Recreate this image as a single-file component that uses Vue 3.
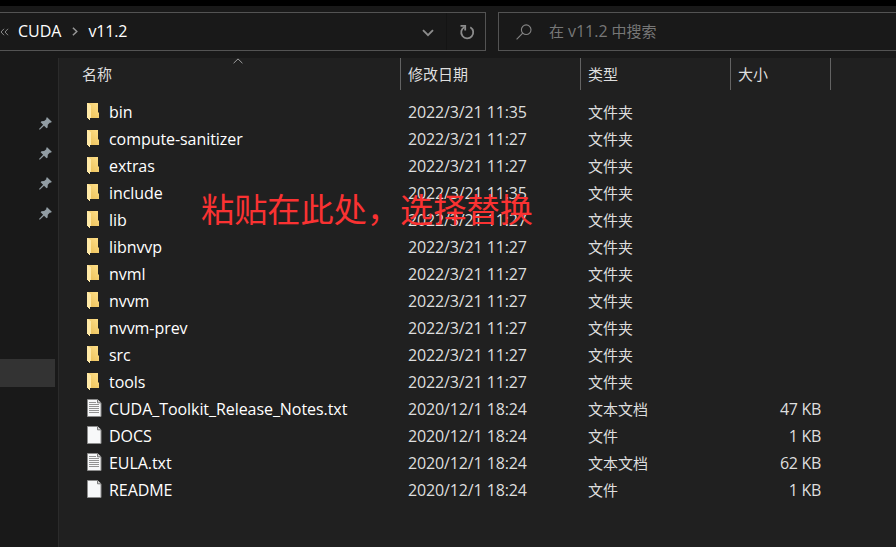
<script setup>
const folders = [
  ['bin', '11:35'],
  ['compute-sanitizer', '11:27'],
  ['extras', '11:27'],
  ['include', '11:35'],
  ['lib', '11:27'],
  ['libnvvp', '11:27'],
  ['nvml', '11:27'],
  ['nvvm', '11:27'],
  ['nvvm-prev', '11:27'],
  ['src', '11:27'],
  ['tools', '11:27'],
].map(([name, time]) => ({ name, date: `2022/3/21 ${time}`, kind: 'folder', type: '文件夹', size: '' }))

const files = [
  ['CUDA_Toolkit_Release_Notes.txt', 'text', '文本文档', '47 KB'],
  ['DOCS', 'file', '文件', '1 KB'],
  ['EULA.txt', 'text', '文本文档', '62 KB'],
  ['README', 'file', '文件', '1 KB'],
].map(([name, kind, type, size]) => ({ name, date: '2020/12/1 18:24', kind, type, size }))

const rows = [...folders, ...files]
</script>

<template>
  <div class="window">
    <div class="titlebar"></div>
    <div class="toolbar">
      <div class="address">
        <svg class="overflow" width="9" height="8" viewBox="0 0 9 8"><path d="M4 .8 1 4l3 3.2M8 .8 5 4l3 3.2" /></svg>
        <span class="crumb">CUDA</span>
        <svg class="sep" width="6" height="9" viewBox="0 0 6 9"><path d="M.9 .7 4.8 4.5.9 8.3" /></svg>
        <span class="crumb last">v11.2</span>
        <svg class="down" width="12" height="8" viewBox="0 0 12 8"><path d="m1 1.2 5 5 5-5" /></svg>
        <div class="refresh">
          <svg width="16" height="16" viewBox="0 0 16 16">
            <path d="M11.3 3.2a6 6 0 1 1-5.8-.2" />
            <path d="M1.5 1.8h4.7v4.7" />
          </svg>
        </div>
      </div>
      <div class="search">
        <svg width="16" height="16" viewBox="0 0 16 16"><circle cx="10.2" cy="5.7" r="4.8" /><path d="M6.7 9.2.6 15.3" /></svg>
        <span>在 <span class="latin">v11.2</span> 中搜索</span>
      </div>
    </div>
    <div class="main">
      <div class="nav">
        <div class="pins">
          <svg v-for="n in 4" :key="n" width="13" height="13" viewBox="0 0 13 13">
            <path d="M8.1.2 12.8 4.8 11.9 5.8 11 5.5 8.8 7.8 8.6 10.5 7.6 11.2 5 8.7.8 12.7 0 12 4.1 7.8 1.6 5.3 2.5 4.3 5.2 4.1 7.5 2 7.1 1.1Z" />
          </svg>
        </div>
        <div class="selected"></div>
      </div>
      <div class="content">
        <div class="head">
          <div class="cell name">
            名称
            <svg class="sort" width="10" height="6" viewBox="0 0 10 6"><path d="M.6 5.2 5 .9l4.4 4.3" /></svg>
          </div>
          <div class="cell date">修改日期</div>
          <div class="cell type">类型</div>
          <div class="cell size">大小</div>
        </div>
        <div class="list">
          <div v-for="row in rows" :key="row.name" class="row">
            <div class="icon">
              <svg v-if="row.kind === 'folder'" width="12" height="17" viewBox="0 0 12 17">
                <defs>
                  <linearGradient id="back" x1="0" y1="1" x2="1" y2="0">
                    <stop offset="0" stop-color="#e9bd55" />
                    <stop offset="1" stop-color="#ffe08a" />
                  </linearGradient>
                </defs>
                <path fill="url(#back)" d="M0 0h11v9.5h1V15H0Z" />
                <path fill="#ffe9a6" d="M0 0h1l3 2.3V15H3v2H2v-1H1v-1H0Z" />
              </svg>
              <svg v-else class="page" width="15" height="18" viewBox="0 0 15 18">
                <path fill="#f7f8f9" stroke="#8d8d8d" d="M.5.5h10l3.5 3.3v13.7H.5Z" />
                <path fill="#d5d5d5" stroke="#777" d="M10.5.5v3.3H14" />
                <path v-if="row.kind === 'text'" stroke="#929292" d="M2 3.5h7M2 5.5h10M2 7.5h10M2 9.5h10M2 11.5h10M2 13.5h10" />
              </svg>
            </div>
            <div class="label">{{ row.name }}</div>
            <div class="when">{{ row.date }}</div>
            <div class="what">{{ row.type }}</div>
            <div class="bytes">{{ row.size }}</div>
          </div>
        </div>
      </div>
    </div>
    <div class="note">粘贴在此处，选择替换</div>
  </div>
</template>

<style>
body { margin: 0; background: #191919; }
</style>

<style scoped>
.window {
  position: relative;
  width: 896px;
  height: 547px;
  overflow: hidden;
  display: flex;
  flex-direction: column;
  background: #191919;
  color: #fff;
  font: 15px/27px "Open Sans", "Noto Sans CJK SC", sans-serif;
  white-space: nowrap;
}
svg { display: block; flex: none; fill: none; }
.titlebar { height: 6px; flex: none; background: #000; }
.toolbar { height: 52px; flex: none; display: flex; gap: 12px; padding-top: 6px; box-sizing: border-box; }
.address, .search { height: 39px; box-sizing: border-box; border: 1px solid #535353; display: flex; align-items: center; }
.address { width: 486px; border-left: 0; }
.overflow { stroke: #8b8b8b; margin-top: 1px; }
.crumb { margin-left: 9px; font-size: 16px; }
.sep { stroke: #969696; stroke-width: 1.5; margin-left: 11px; }
.last { margin-left: 10px; letter-spacing: -.15px; }
.down { stroke: #8c8c8c; stroke-width: 1.9; margin: 2px 12px 0 auto; }
.refresh { height: 37px; width: 38px; border-left: 1px solid #141414; display: flex; align-items: center; justify-content: center; }
.refresh svg { stroke: #8c8c8c; stroke-width: 1.8; margin-right: -1px; }
.search { flex: 1; border-right: 0; padding-left: 17px; gap: 17px; color: #777; }
.search svg { stroke: #858585; stroke-width: 1.1; }
.latin { font-size: 16px; }
.main { flex: 1; display: flex; }
.nav { width: 55px; margin-right: 3px; }
.pins { height: 301px; box-sizing: border-box; padding: 59px 0 0 39px; display: flex; flex-direction: column; gap: 17px; }
.pins svg { fill: #929da4; }
.selected { height: 28px; background: #333; }
.content { flex: 1; background: #202020; border-left: 1px solid #2b2b2b; }
.head { display: flex; height: 32px; line-height: 32px; color: #dedede; }
.cell { box-sizing: border-box; border-right: 1px solid #636363; padding-left: 7px; }
.name { width: 342px; padding-left: 23px; position: relative; }
.sort { position: absolute; left: 173.5px; top: 0; stroke: #a0a0a0; }
.date { width: 180px; }
.type { width: 150px; }
.size { width: 100px; }
.list { padding: 9px 0 0 28px; }
.row { display: flex; height: 27px; }
.icon { width: 22px; padding-top: 4px; box-sizing: border-box; }
.page { margin-top: -1px; }
.label { width: 299px; font-size: 16px; letter-spacing: -.06px; }
.when { width: 180px; color: #dedede; font-size: 16px; letter-spacing: -.13px; }
.what { width: 133px; color: #dedede; }
.bytes { width: 100px; text-align: right; color: #dedede; font-size: 16px; letter-spacing: -.3px; }
.note { position: absolute; left: 201px; top: 186px; font-size: 33.2px; line-height: 48px; color: #fa3232; }
</style>
